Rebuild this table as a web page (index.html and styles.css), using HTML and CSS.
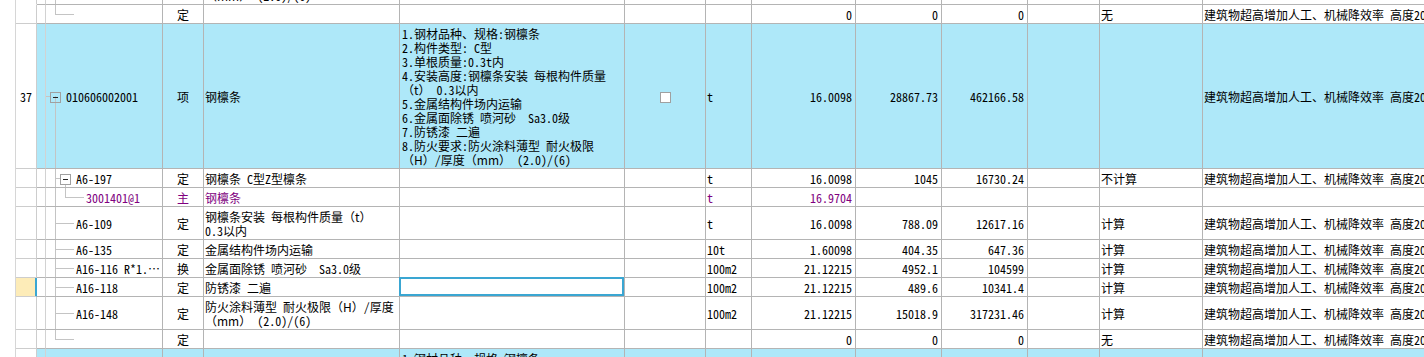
FILE: index.html
```html
<!DOCTYPE html>
<html lang="zh-CN">
<head>
<meta charset="utf-8">
<title>清单</title>
<link rel="stylesheet" href="styles.css">
</head>
<body>
<div class="grid">
  <div class="row h2">
    <div class="c num nob"></div><div class="c lvl"></div><div class="c code t-vert"></div>
    <div class="c typ">定</div>
    <div class="c txt"><span class="tx">防火涂料薄型 耐火极限<span class="fw">（H）</span>/厚度<br><span class="fw">（mm）</span> (2.0)/(6)</span></div>
    <div class="c txt"></div><div class="c"></div>
    <div class="c txt">100m2</div>
    <div class="c n">21.12215</div><div class="c n">15018.9</div><div class="c n">317231.46</div>
    <div class="c"></div><div class="c txt">计算</div>
    <div class="c txt">建筑物超高增加人工、机械降效率 高度20m以内</div>
  </div>
  <div class="row h1">
    <div class="c num"></div><div class="c lvl"></div><div class="c code t-last"></div>
    <div class="c typ">定</div>
    <div class="c txt"></div><div class="c txt"></div><div class="c"></div><div class="c txt"></div>
    <div class="c n">0</div><div class="c n">0</div><div class="c n">0</div>
    <div class="c"></div><div class="c txt">无</div>
    <div class="c txt">建筑物超高增加人工、机械降效率 高度20m以内</div>
  </div>
  <div class="row h10 blue">
    <div class="c num">37</div><div class="c lvl"></div>
    <div class="c code item t-item"><span class="box"></span>010606002001</div>
    <div class="c typ">项</div>
    <div class="c txt">钢檩条</div>
    <div class="c txt desc"><span class="tx">1.钢材品种、规格:钢檩条<br>2.构件类型: C型<br>3.单根质量:0.3t内<br>4.安装高度:钢檩条安装 每根构件质量<br><span class="fw">（t）</span> 0.3以内<br>5.金属结构件场内运输<br>6.金属面除锈 喷河砂&nbsp; Sa3.0级<br>7.防锈漆 二遍<br>8.防火要求:防火涂料薄型 耐火极限<br><span class="fw">（H）</span>/厚度<span class="fw">（mm）</span> (2.0)/(6)</span></div>
    <div class="c chk"><span class="cb"></span></div>
    <div class="c txt">t</div>
    <div class="c n">16.0098</div><div class="c n">28867.73</div><div class="c n">462166.58</div>
    <div class="c"></div><div class="c txt"></div>
    <div class="c txt">建筑物超高增加人工、机械降效率 高度20m以内</div>
  </div>
  <div class="row h1">
    <div class="c num"></div><div class="c lvl"></div>
    <div class="c code sub t-sub"><span class="box"></span>A6-197</div>
    <div class="c typ">定</div>
    <div class="c txt">钢檩条 C型Z型檩条</div>
    <div class="c txt"></div><div class="c"></div>
    <div class="c txt">t</div>
    <div class="c n">16.0098</div><div class="c n">1045</div><div class="c n">16730.24</div>
    <div class="c"></div><div class="c txt">不计算</div>
    <div class="c txt">建筑物超高增加人工、机械降效率 高度20m以内</div>
  </div>
  <div class="row h1 pur">
    <div class="c num"></div><div class="c lvl"></div>
    <div class="c code mat t-mat">3001401@1</div>
    <div class="c typ">主</div>
    <div class="c txt">钢檩条</div>
    <div class="c txt"></div><div class="c"></div>
    <div class="c txt">t</div>
    <div class="c n">16.9704</div><div class="c n"></div><div class="c n"></div>
    <div class="c"></div><div class="c txt"></div><div class="c txt"></div>
  </div>
  <div class="row h2">
    <div class="c num"></div><div class="c lvl"></div>
    <div class="c code t-mid">A6-109</div>
    <div class="c typ">定</div>
    <div class="c txt"><span class="tx">钢檩条安装 每根构件质量<span class="fw">（t）</span><br>0.3以内</span></div>
    <div class="c txt"></div><div class="c"></div>
    <div class="c txt">t</div>
    <div class="c n">16.0098</div><div class="c n">788.09</div><div class="c n">12617.16</div>
    <div class="c"></div><div class="c txt">计算</div>
    <div class="c txt">建筑物超高增加人工、机械降效率 高度20m以内</div>
  </div>
  <div class="row h1">
    <div class="c num"></div><div class="c lvl"></div>
    <div class="c code t-mid">A6-135</div>
    <div class="c typ">定</div>
    <div class="c txt">金属结构件场内运输</div>
    <div class="c txt"></div><div class="c"></div>
    <div class="c txt">10t</div>
    <div class="c n">1.60098</div><div class="c n">404.35</div><div class="c n">647.36</div>
    <div class="c"></div><div class="c txt">计算</div>
    <div class="c txt">建筑物超高增加人工、机械降效率 高度20m以内</div>
  </div>
  <div class="row h1">
    <div class="c num"></div><div class="c lvl"></div>
    <div class="c code t-mid">A16-116 R*1.…</div>
    <div class="c typ">换</div>
    <div class="c txt">金属面除锈 喷河砂&nbsp; Sa3.0级</div>
    <div class="c txt"></div><div class="c"></div>
    <div class="c txt">100m2</div>
    <div class="c n">21.12215</div><div class="c n">4952.1</div><div class="c n">104599</div>
    <div class="c"></div><div class="c txt">计算</div>
    <div class="c txt">建筑物超高增加人工、机械降效率 高度20m以内</div>
  </div>
  <div class="row h1">
    <div class="c num cur"></div><div class="c lvl"></div>
    <div class="c code t-mid">A16-118</div>
    <div class="c typ">定</div>
    <div class="c txt">防锈漆 二遍</div>
    <div class="c txt sel"></div><div class="c"></div>
    <div class="c txt">100m2</div>
    <div class="c n">21.12215</div><div class="c n">489.6</div><div class="c n">10341.4</div>
    <div class="c"></div><div class="c txt">计算</div>
    <div class="c txt">建筑物超高增加人工、机械降效率 高度20m以内</div>
  </div>
  <div class="row h2">
    <div class="c num"></div><div class="c lvl"></div>
    <div class="c code t-mid">A16-148</div>
    <div class="c typ">定</div>
    <div class="c txt"><span class="tx">防火涂料薄型 耐火极限<span class="fw">（H）</span>/厚度<br><span class="fw">（mm）</span> (2.0)/(6)</span></div>
    <div class="c txt"></div><div class="c"></div>
    <div class="c txt">100m2</div>
    <div class="c n">21.12215</div><div class="c n">15018.9</div><div class="c n">317231.46</div>
    <div class="c"></div><div class="c txt">计算</div>
    <div class="c txt">建筑物超高增加人工、机械降效率 高度20m以内</div>
  </div>
  <div class="row h1">
    <div class="c num"></div><div class="c lvl"></div><div class="c code t-last"></div>
    <div class="c typ">定</div>
    <div class="c txt"></div><div class="c txt"></div><div class="c"></div><div class="c txt"></div>
    <div class="c n">0</div><div class="c n">0</div><div class="c n">0</div>
    <div class="c"></div><div class="c txt">无</div>
    <div class="c txt">建筑物超高增加人工、机械降效率 高度20m以内</div>
  </div>
  <div class="row h10 blue">
    <div class="c num">38</div><div class="c lvl"></div>
    <div class="c code item t-item"><span class="box"></span>010606002002</div>
    <div class="c typ">项</div>
    <div class="c txt">钢檩条</div>
    <div class="c txt desc"><span class="tx">1.钢材品种、规格:钢檩条<br>2.构件类型: Z型<br>3.单根质量:0.3t内<br>4.安装高度:钢檩条安装 每根构件质量<br><span class="fw">（t）</span> 0.3以内<br>5.金属结构件场内运输<br>6.金属面除锈 喷河砂&nbsp; Sa3.0级<br>7.防锈漆 二遍<br>8.防火要求:防火涂料薄型 耐火极限<br><span class="fw">（H）</span>/厚度<span class="fw">（mm）</span> (2.0)/(6)</span></div>
    <div class="c chk"><span class="cb"></span></div>
    <div class="c txt">t</div>
    <div class="c n"></div><div class="c n"></div><div class="c n"></div>
    <div class="c"></div><div class="c txt"></div><div class="c txt"></div>
  </div>
</div>
</body>
</html>
```

FILE: styles.css
```css
html, body {
  margin: 0;
  padding: 0;
  overflow: hidden;
  background: #fff;
}
body {
  font-family: "Noto Sans CJK SC", sans-serif;
  font-size: 12px;
  line-height: 14px;
  font-feature-settings: "hwid" 1;
  color: #000;
}
.fw { font-feature-settings: normal; }
.tx { display: block; }
.grid {
  margin: -28px 0 0 15px;
  border-left: 1px solid #d6d6d6;
  width: max-content;
}
.row {
  display: grid;
  grid-template-columns: 21px 9px 117px 41px 196px 225px 81px 46px 104px 86px 86px 72px 103px 300px;
}
.h1 { height: 19px; }
.h2 { height: 33px; }
.h10 { height: 145px; }
.blue { background: #aee8f9; }
.pur { color: #800080; }
.c {
  box-sizing: border-box;
  border-right: 1px solid #b4b4b4;
  border-bottom: 1px solid #b4b4b4;
  display: flex;
  align-items: center;
  padding: 3px 1px 1px 1px;
  white-space: nowrap;
  overflow: hidden;
  min-width: 0;
}
.desc { padding-left: 2px; }
.num {
  background: #fff;
  border-color: #cdcdcd;
  padding-left: 4px;
}
.nob { border-bottom-color: transparent; }
.lvl { border-right-color: #d2d2d2; }
.typ { justify-content: center; padding-left: 0; padding-right: 0; }
.n { justify-content: flex-end; padding-right: 3px; }
.chk { justify-content: center; }
.cb {
  width: 11px;
  height: 11px;
  box-sizing: border-box;
  border: 1px solid #a0a0a0;
  background: #fff;
}
.code { padding-left: 30px; }
.code.item { padding-left: 4px; }
.code.sub { padding-left: 14px; }
.code.mat { padding-left: 40px; }
.box {
  flex: none;
  width: 11px;
  height: 11px;
  box-sizing: border-box;
  border: 1px solid #a0a0a0;
  background: linear-gradient(#222, #222) center / 5px 1px no-repeat;
  margin-right: 5px;
}
.row:not(.blue) .box { background-color: #fff; }
.t-vert {
  background: linear-gradient(#c4c4c4, #c4c4c4) 9px 0 / 1px 100% no-repeat;
}
.t-mid {
  background:
    linear-gradient(#c4c4c4, #c4c4c4) 9px 0 / 1px 100% no-repeat,
    linear-gradient(#c4c4c4, #c4c4c4) 9px 50% / 19px 1px no-repeat;
}
.t-last {
  background:
    linear-gradient(#c4c4c4, #c4c4c4) 9px 0 / 1px 50% no-repeat,
    linear-gradient(#c4c4c4, #c4c4c4) 9px 50% / 19px 1px no-repeat;
}
.t-item {
  background:
    linear-gradient(#c4c4c4, #c4c4c4) 9px 100% / 1px 50% no-repeat,
    linear-gradient(#c4c4c4, #c4c4c4) 0 50% / 4px 1px no-repeat;
}
.t-sub {
  background:
    linear-gradient(#c4c4c4, #c4c4c4) 9px 0 / 1px 100% no-repeat,
    linear-gradient(#c4c4c4, #c4c4c4) 9px 50% / 5px 1px no-repeat,
    linear-gradient(#c4c4c4, #c4c4c4) 19px 100% / 1px 50% no-repeat;
}
.t-mat {
  background:
    linear-gradient(#c4c4c4, #c4c4c4) 9px 0 / 1px 100% no-repeat,
    linear-gradient(#c4c4c4, #c4c4c4) 19px 0 / 1px 50% no-repeat,
    linear-gradient(#c4c4c4, #c4c4c4) 19px 50% / 19px 1px no-repeat;
}
.cur {
  background: #fdecb8;
  border-right-color: #3aa6d2;
  box-shadow: inset -1px 0 #3aa6d2;
}
.sel {
  position: relative;
  overflow: visible;
}
.sel::after {
  content: "";
  position: absolute;
  left: -1px;
  top: -1px;
  right: 0;
  bottom: 0;
  border: 2px solid #3aa6d2;
}
```
